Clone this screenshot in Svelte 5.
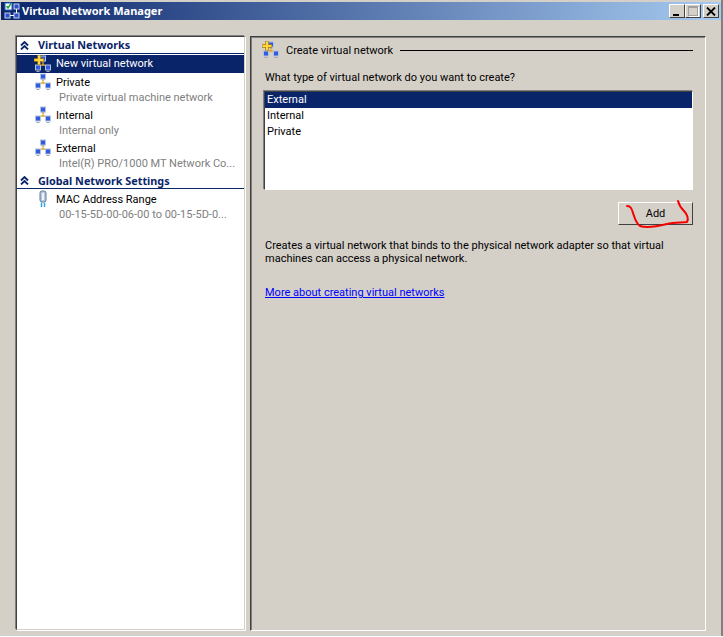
<script>
  const networks = [
    { name: 'Private', sub: 'Private virtual machine network' },
    { name: 'Internal', sub: 'Internal only' },
    { name: 'External', sub: 'Intel(R) PRO/1000 MT Network Co...' }
  ];
  const types = ['External', 'Internal', 'Private'];
</script>

{#snippet netIcon(plus)}
  <svg class="net" width="18" height="18" viewBox="0 0 18 18">
    <path d="M9 6V11M4.500 11.500L9 9.500L13.500 11.500" stroke="#e0a830" stroke-width="1.200" fill="none" />
    <rect x="6.5" y="1" width="5" height="5" fill="#2f5ce0" stroke="#b4c2da" />
    <rect x="1.500" y="10" width="5" height="5" fill="#2f5ce0" stroke="#b4c2da" />
    <rect x="11.500" y="10" width="5" height="5" fill="#2f5ce0" stroke="#b4c2da" />
    <path d="M2.500 16.500H5.500M12.500 16.500H15.500M7.500 6.800H10.500" stroke="#a0a6b0" stroke-width="1" />
    {#if plus}
      <path d="M5 0V10M0 5H10" stroke="#a87a10" stroke-width="3.400" />
      <path d="M5 0.500V9.500M0.500 5H9.500" stroke="#ffd83a" stroke-width="2" />
    {/if}
  </svg>
{/snippet}

{#snippet chevrons()}
  <svg class="chev" width="9" height="9" viewBox="0 0 9 9">
    <path d="M1 4.500L4.500 1L8 4.500M1 8.500L4.500 5L8 8.500" stroke="#0a246a" stroke-width="1.800" fill="none" />
  </svg>
{/snippet}

<div class="window">
  <div class="titlebar">
    <svg class="appicon" width="18" height="18" viewBox="0 0 18 18">
      <rect x="2" y="1" width="7" height="7" fill="#fff" stroke="#2060c0" />
      <path d="M3.500 4L5 6L8 1.500" stroke="#20a040" stroke-width="1.400" fill="none" />
      <rect x="11" y="2" width="5" height="5" fill="#2a4fd0" stroke="#c8d4e8" />
      <rect x="2" y="11" width="5" height="5" fill="#2a4fd0" stroke="#c8d4e8" />
      <rect x="11" y="11" width="5" height="5" fill="#2a4fd0" stroke="#c8d4e8" />
      <path d="M7 13.500H11M13.500 7V11" stroke="#fff" />
    </svg>
    <span class="title">Virtual Network Manager</span>
    <div class="caption">
      <button class="capbtn" aria-label="Minimize"><span class="min"></span></button>
      <button class="capbtn" aria-label="Maximize" disabled><span class="max"></span></button>
      <button class="capbtn close" aria-label="Close">
        <svg width="10" height="9" viewBox="0 0 10 9"><path d="M1 0.500L9 8.500M9 0.500L1 8.500" stroke="#000" stroke-width="1.800" /></svg>
      </button>
    </div>
  </div>

  <div class="body">
    <nav class="tree">
      <h2 class="group">{@render chevrons()}Virtual Networks</h2>
      <div class="row selected">
        {@render netIcon(true)}<span>New virtual network</span>
      </div>
      {#each networks as n}
        <div class="row">{@render netIcon(false)}<span>{n.name}</span></div>
        <div class="sub">{n.sub}</div>
      {/each}
      <h2 class="group second">{@render chevrons()}Global Network Settings</h2>
      <div class="row">
        <svg class="net" width="18" height="18" viewBox="0 0 18 18">
          <rect x="6" y="1" width="6" height="11" rx="2" fill="#b8c8dc" stroke="#5f7f9f" />
          <rect x="8" y="3" width="2" height="7" fill="#eef4fa" />
          <path d="M7.500 12.500V17M10.500 12.500V17" stroke="#30a8e0" stroke-width="1.500" />
        </svg>
        <span>MAC Address Range</span>
      </div>
      <div class="sub">00-15-5D-00-06-00 to 00-15-5D-0...</div>
    </nav>

    <main class="pane">
      <div class="heading">
        {@render netIcon(true)}
        <span>Create virtual network</span>
        <div class="rule"></div>
      </div>
      <p class="question">What type of virtual network do you want to create?</p>
      <div class="list">
        {#each types as t, i}
          <div class="option" class:on={i === 0}>{t}</div>
        {/each}
      </div>
      <div class="actions">
        <button class="add">Add</button>
        <svg class="scribble" width="72" height="32" viewBox="0 0 72 32">
          <path d="M6 7C8 7 10 8 11 11C13 16 14 24 19 27C25 29 38 27 46 25C54 23 62 24 66 23C68 20 66 15 63 12C60 9 58 6 57 2" stroke="#f40000" stroke-width="2" fill="none" stroke-linecap="round" stroke-linejoin="round" />
        </svg>
      </div>
      <p class="desc">Creates a virtual network that binds to the physical network adapter so that virtual machines can access a physical network.</p>
      <a class="more" href="#more">More about creating virtual networks</a>
    </main>
  </div>
</div>

<style>
  :global(body) {
    margin: 0;
    background: #fff;
  }
  .window {
    width: 723px;
    height: 636px;
    box-sizing: border-box;
    padding: 2px 0 0 1px;
    background: #d4d0c8;
    border-right: 2px solid #808080;
    display: flex;
    flex-direction: column;
    font: 11px/16px Roboto, sans-serif;
    color: #000;
    overflow: hidden;
  }
  .titlebar {
    height: 18px;
    flex: none;
    display: flex;
    align-items: center;
    padding: 0 2px;
    background: linear-gradient(90deg, #0a246a, #a6caf0);
  }
  .appicon {
    flex: none;
  }
  .title {
    color: #fff;
    font: bold 11px "Noto Sans", sans-serif;
    margin-left: 1px;
    position: relative;
    top: -1px;
  }
  .caption {
    margin-left: auto;
    display: flex;
  }
  .capbtn {
    width: 16px;
    height: 14px;
    padding: 0;
    background: #d4d0c8;
    border: 1px solid;
    border-color: #fff #404040 #404040 #fff;
    display: flex;
    align-items: center;
    justify-content: center;
  }
  .close {
    margin-left: 2px;
  }
  .min {
    width: 6px;
    height: 2px;
    background: #000;
    margin-top: 7px;
    margin-right: 2px;
  }
  .max {
    width: 8px;
    height: 7px;
    border: 1px solid #a0a0a0;
    border-top-width: 2px;
    box-shadow: 1px 1px 0 #fff;
  }
  .body {
    flex: 1;
    min-height: 0;
    display: grid;
    grid-template-columns: 229px 456px;
    column-gap: 5px;
    padding: 16px 0 6px 15px;
  }
  .tree {
    background: #fff;
    border: 1px solid;
    border-color: #404040 #d4d0c8 #d4d0c8 #404040;
    box-shadow: 1px 1px 0 #fff, -1px -1px 0 #808080;
    min-height: 0;
  }
  .group {
    margin: 0 0 1px;
    font: bold 10.800px/16px "Noto Sans", sans-serif;
    color: #0a246a;
    height: 16px;
    display: flex;
    align-items: center;
    gap: 9px;
    padding-left: 3px;
    border-bottom: 1px solid #0a246a;
  }
  .second {
    height: 15px;
    padding-top: 1px;
    line-height: 17px;
  }
  .chev {
    flex: none;
  }
  .row {
    height: 18px;
    display: flex;
    align-items: center;
    gap: 4px;
    padding-left: 17px;
  }
  .row span {
    padding-top: 1px;
  }
  .selected span {
    padding-top: 0;
  }
  .selected {
    background: #0a246a;
    color: #fff;
  }
  .sub {
    height: 15px;
    line-height: 14px;
    color: #808080;
    padding-left: 42px;
    white-space: nowrap;
  }
  .net {
    flex: none;
  }
  .pane {
    border: 1px solid;
    border-color: #404040 #fff #fff #404040;
    box-shadow: inset 1px 1px 0 #808080;
    margin-bottom: -1px;
    box-sizing: border-box;
    padding: 4px 12px 0 14px;
    display: flex;
    flex-direction: column;
    min-height: 0;
  }
  .heading {
    height: 18px;
    display: flex;
    align-items: center;
    gap: 6px;
    margin-left: -3px;
  }
  .heading span {
    padding-top: 2px;
  }
  .rule {
    flex: 1;
    height: 1px;
    background: #000;
    margin-left: 1px;
  }
  .question {
    margin: 11px 0 0;
    line-height: 16px;
  }
  .list {
    margin: 5px 0 0 -1px;
    height: 99px;
    box-sizing: border-box;
    background: #fff;
    border: 1px solid;
    border-color: #404040 #fff #fff #404040;
    box-shadow: -1px -1px 0 #808080;
  }
  .option {
    height: 16px;
    line-height: 16px;
    padding-left: 2px;
  }
  .on {
    background: #0a246a;
    color: #fff;
  }
  .actions {
    margin-top: 12px;
    display: flex;
    justify-content: flex-end;
    position: relative;
  }
  .add {
    width: 75px;
    height: 23px;
    padding: 0;
    background: #d4d0c8;
    color: #000;
    font: 11px Roboto, sans-serif;
    border: 1px solid;
    border-color: #fff #404040 #404040 #fff;
  }
  .scribble {
    position: absolute;
    right: 0;
    top: -3px;
  }
  .desc {
    margin: 14px 0 0;
    line-height: 13px;
  }
  .more {
    margin-top: 21px;
    color: #0000ff;
    text-decoration: underline;
    line-height: 13px;
  }
</style>
